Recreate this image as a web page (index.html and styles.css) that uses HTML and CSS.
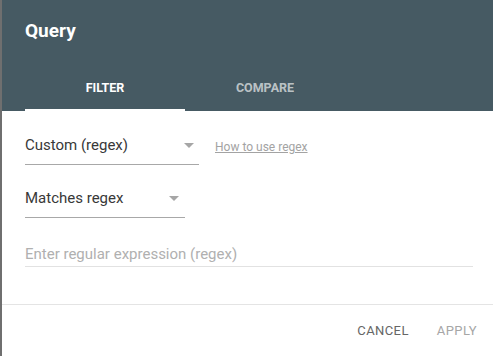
FILE: index.html
```html
<!DOCTYPE html>
<html>
<head>
<meta charset="utf-8">
<link rel="stylesheet" href="styles.css">
</head>
<body>
<div class="dialog">
  <header class="head">
    <h1 class="title">Query</h1>
    <nav class="tabs">
      <div class="tab active">FILTER</div>
      <div class="tab">COMPARE</div>
    </nav>
  </header>
  <section class="body">
    <div class="row">
      <div class="select select-wide">
        <span class="value">Custom (regex)</span>
        <span class="caret"></span>
      </div>
      <a class="help">How to use regex</a>
    </div>
    <div class="row row-2">
      <div class="select select-narrow">
        <span class="value">Matches regex</span>
        <span class="caret"></span>
      </div>
    </div>
    <div class="row row-3">
      <div class="input">Enter regular expression (regex)</div>
    </div>
  </section>
  <footer class="actions">
    <span class="btn cancel">CANCEL</span>
    <span class="btn apply">APPLY</span>
  </footer>
</div>
</body>
</html>
```
FILE: styles.css
```css
html, body {
  margin: 0;
  padding: 0;
  background: #fff;
}
body {
  font-family: Roboto, "Liberation Sans", sans-serif;
  width: 493px;
  height: 356px;
  overflow: hidden;
}
.dialog {
  height: 356px;
  border-left: 2px solid #6f6f6f;
  box-sizing: border-box;
  display: flex;
  flex-direction: column;
}
.head {
  background: #465a63;
  height: 111px;
  box-sizing: border-box;
  padding: 19px 0 0 23px;
  display: flex;
  flex-direction: column;
}
.title {
  margin: 0;
  color: #fff;
  font-size: 19px;
  font-weight: 700;
  line-height: 24px;
  letter-spacing: 0;
}
.tabs {
  margin-top: 20px;
  display: flex;
  height: 48px;
}
.tab {
  width: 160px;
  box-sizing: border-box;
  display: flex;
  align-items: center;
  justify-content: center;
  font-size: 12.5px;
  font-weight: 700;
  color: rgba(255,255,255,0.65);
}
.tab.active {
  color: #fff;
  border-bottom: 2px solid #fff;
  padding-top: 2px;
}
.body {
  padding: 19px 0 0 23px;
  display: flex;
  flex-direction: column;
}
.row {
  display: flex;
  align-items: center;
  height: 35px;
}
.row-2 { margin-top: 18px; }
.row-3 { margin-top: 14px; }
.select {
  height: 35px;
  box-sizing: border-box;
  border-bottom: 1px solid #a8a8a8;
  display: flex;
  align-items: center;
  justify-content: space-between;
  padding-bottom: 4px;
}
.select-wide { width: 174px; padding-right: 5px; }
.select-narrow { width: 160px; padding-right: 6px; }
.value {
  font-size: 15px;
  color: #383838;
}
.caret {
  width: 0;
  height: 0;
  border-left: 5.5px solid transparent;
  border-right: 5.5px solid transparent;
  border-top: 5.5px solid #a6a6a6;
}
.help {
  margin-left: 16px;
  font-size: 12px;
  color: #a3a3a3;
  text-decoration: underline;
  padding-bottom: 1px;
}
.input {
  width: 448px;
  height: 35px;
  box-sizing: border-box;
  border-bottom: 1px solid #e2e2e2;
  display: flex;
  align-items: center;
  padding-top: 10px;
  font-size: 15px;
  color: #b0b0b0;
}
.actions {
  margin-top: 37px;
  border-top: 1px solid #e4e4e4;
  display: flex;
  justify-content: flex-end;
  align-items: center;
  height: 50px;
  padding-right: 16px;
  gap: 28px;
}
.btn {
  font-size: 13px;
  letter-spacing: 0.4px;
}
.cancel { color: #666; }
.apply { color: #a6a6a6; }
```
